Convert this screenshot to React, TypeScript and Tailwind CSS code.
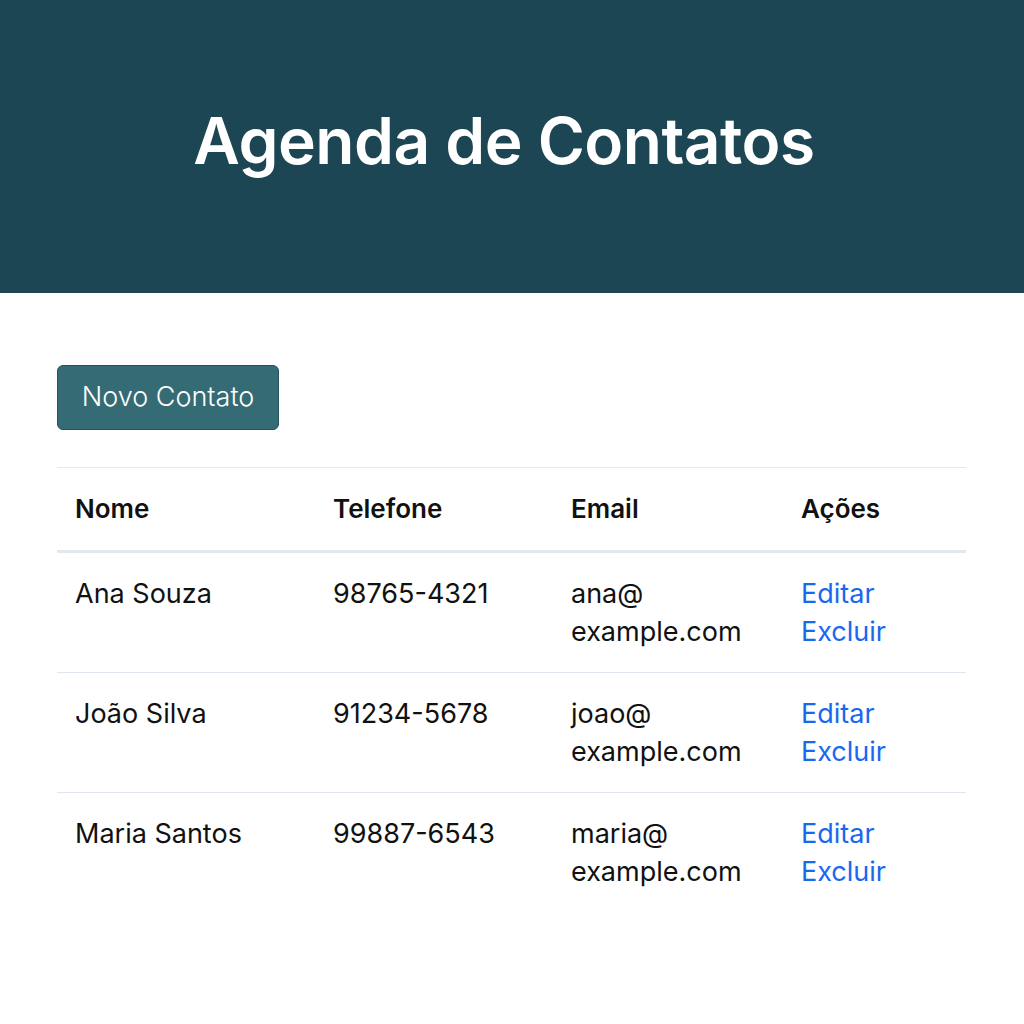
import React from 'react';

const contatos = [
  { nome: 'Ana Souza', telefone: '98765-4321', user: 'ana@', dominio: 'example.com' },
  { nome: 'João Silva', telefone: '91234-5678', user: 'joao@', dominio: 'example.com' },
  { nome: 'Maria Santos', telefone: '99887-6543', user: 'maria@', dominio: 'example.com' },
];

export default function App() {
  return (
    <div className="min-h-screen bg-white text-[#111111]" style={{ fontFamily: 'Inter, "Noto Sans", sans-serif' }}>
      {/* Header */}
      <header className="h-[293px] bg-[#1d4654] flex items-center justify-center pb-[12px] pr-[16px]">
        <h1 className="text-[64px] font-semibold text-white tracking-[-0.5px]">Agenda de Contatos</h1>
      </header>

      <main className="px-[57px] pt-[72px]">
        <button className="w-[222px] h-[65px] rounded-[6px] bg-[#346b75] border border-[#24525c] text-white text-[27px] font-light">
          Novo Contato
        </button>

        <table className="mt-[37px] w-[909px] border-t border-[#e5e9ee] text-[27px] leading-[38px] text-left">
          <thead>
            <tr className="border-b-[3px] border-[#e2e8f0] text-[26px]">
              <th className="w-[258px] pl-[18px] py-[22px] font-semibold">Nome</th>
              <th className="w-[238px] pl-[18px] py-[22px] font-semibold">Telefone</th>
              <th className="w-[230px] pl-[18px] py-[22px] font-semibold">Email</th>
              <th className="pl-[18px] py-[22px] font-semibold">Ações</th>
            </tr>
          </thead>
          <tbody>
            {contatos.map((c, i) => (
              <tr key={c.nome} className={i < contatos.length - 1 ? 'border-b border-[#dfe5ec]' : ''}>
                <td className="pl-[18px] pt-[22px] pb-[21px] align-top">{c.nome}</td>
                <td className="pl-[18px] pt-[22px] pb-[21px] align-top">{c.telefone}</td>
                <td className="pl-[18px] pt-[22px] pb-[21px] align-top">
                  {c.user}
                  <br />
                  {c.dominio}
                </td>
                <td className="pl-[18px] pt-[22px] pb-[21px] align-top text-[#1769f0]">
                  <div>Editar</div>
                  <div>Excluir</div>
                </td>
              </tr>
            ))}
          </tbody>
        </table>
      </main>
    </div>
  );
}
